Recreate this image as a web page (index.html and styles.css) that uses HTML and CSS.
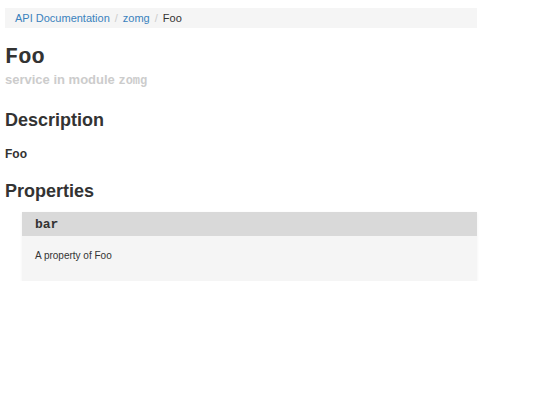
FILE: index.html
```html
<!DOCTYPE html>
<html lang="en">
<head>
  <meta charset="UTF-8" />
  <title>Foo</title>
  <link rel="stylesheet" href="styles.css">
</head>
<body>
  <div class="page">
    <ul class="breadcrumb">
      <li><a href="#">API Documentation</a></li>
      <li class="sep">/</li>
      <li><a href="#">zomg</a></li>
      <li class="sep">/</li>
      <li class="active">Foo</li>
    </ul>

    <h1 class="title"><code>Foo</code></h1>
    <div class="subtitle">service in module <code>zomg</code></div>

    <h2>Description</h2>
    <p class="desc">Foo</p>

    <h2>Properties</h2>
    <div class="prop">
      <div class="prop-name"><code>bar</code></div>
      <div class="prop-body">A property of Foo</div>
    </div>
  </div>
</body>
</html>
```

FILE: styles.css
```css
body {
  margin: 0;
  font-family: "Liberation Sans", Arial, sans-serif;
  color: #333;
  background: #fff;
}
.page {
  width: 472px;
  padding: 8px 0 0 5px;
}
code {
  font-family: "Liberation Mono", "Courier New", monospace;
}
.breadcrumb {
  list-style: none;
  margin: 0;
  padding: 0 10px;
  height: 20px;
  display: flex;
  align-items: center;
  gap: 5px;
  background: #f5f5f5;
  font-size: 11px;
}
.breadcrumb a {
  color: #3a82bd;
  text-decoration: none;
}
.breadcrumb .sep {
  color: #ccc;
}
.breadcrumb .active {
  color: #333;
}
.title {
  margin: 16px 0 0;
  font-size: 22px;
  line-height: 24px;
}
.title code {
  font-weight: bold;
}
.subtitle {
  margin-top: 2px;
  color: #ccc;
  font-size: 13px;
  font-weight: bold;
}
.subtitle code {
  font-size: 12px;
}
h2 {
  margin: 21px 0 0;
  font-size: 18px;
  line-height: 22px;
}
.desc {
  margin: 16px 0 0;
  font-size: 12px;
  font-weight: bold;
}
.desc + h2 {
  margin-top: 19px;
}
.prop {
  margin: 10px 0 0 17px;
  background: #f5f5f5;
  box-shadow: 0 1px 3px rgba(0, 0, 0, 0.06);
}
.prop-name {
  background: #d9d9d9;
  height: 24px;
  padding: 0 13px;
  display: flex;
  align-items: center;
  font-size: 13px;
  font-weight: bold;
}
.prop-body {
  padding: 14px 13px 20px;
  font-size: 10px;
}
```
